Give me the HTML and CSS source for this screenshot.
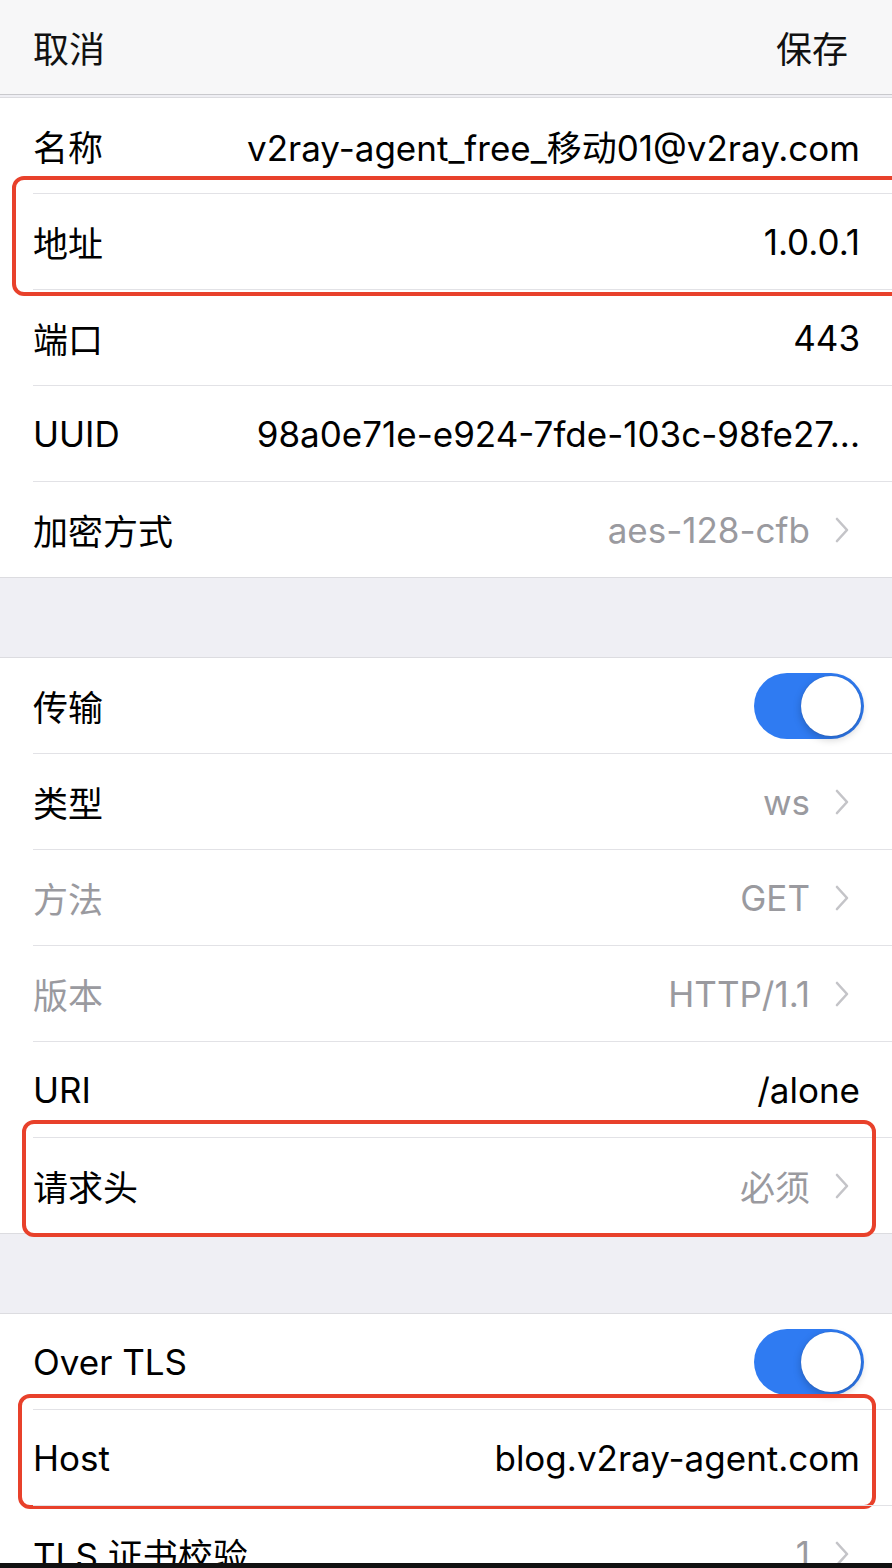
FILE: index.html
```html
<!DOCTYPE html>
<html lang="zh-CN">
<head>
<meta charset="utf-8">
<title>编辑配置</title>
<link rel="stylesheet" href="styles.css">
</head>
<body>
<div class="screen">
  <header class="navbar">
    <span class="nav-btn">取消</span>
    <span class="nav-btn">保存</span>
  </header>

  <section class="group first">
    <div class="row">
      <span class="label">名称</span>
      <span class="value">v2ray-agent_free_移动01@v2ray.com</span>
    </div>
    <div class="row">
      <span class="label">地址</span>
      <span class="value">1.0.0.1</span>
      <span class="mark mark-addr"></span>
    </div>
    <div class="row">
      <span class="label">端口</span>
      <span class="value">443</span>
    </div>
    <div class="row">
      <span class="label">UUID</span>
      <span class="value">98a0e71e-e924-7fde-103c-98fe27...</span>
    </div>
    <div class="row nav">
      <span class="label">加密方式</span>
      <span class="value muted">aes-128-cfb</span>
      <svg class="chev" viewBox="0 0 16 28"><path d="M3 3 L13 14 L3 25"/></svg>
    </div>
  </section>

  <section class="group">
    <div class="row switch-row">
      <span class="label">传输</span>
      <span class="toggle"><span class="knob"></span></span>
    </div>
    <div class="row nav">
      <span class="label">类型</span>
      <span class="value muted">ws</span>
      <svg class="chev" viewBox="0 0 16 28"><path d="M3 3 L13 14 L3 25"/></svg>
    </div>
    <div class="row nav">
      <span class="label muted">方法</span>
      <span class="value muted">GET</span>
      <svg class="chev" viewBox="0 0 16 28"><path d="M3 3 L13 14 L3 25"/></svg>
    </div>
    <div class="row nav">
      <span class="label muted">版本</span>
      <span class="value muted">HTTP/1.1</span>
      <svg class="chev" viewBox="0 0 16 28"><path d="M3 3 L13 14 L3 25"/></svg>
    </div>
    <div class="row">
      <span class="label">URI</span>
      <span class="value">/alone</span>
    </div>
    <div class="row nav">
      <span class="label">请求头</span>
      <span class="value muted">必须</span>
      <svg class="chev" viewBox="0 0 16 28"><path d="M3 3 L13 14 L3 25"/></svg>
      <span class="mark mark-header"></span>
    </div>
  </section>

  <section class="group">
    <div class="row switch-row">
      <span class="label">Over TLS</span>
      <span class="toggle"><span class="knob"></span></span>
    </div>
    <div class="row">
      <span class="label">Host</span>
      <span class="value">blog.v2ray-agent.com</span>
      <span class="mark mark-host"></span>
    </div>
    <div class="row nav">
      <span class="label">TLS 证书校验</span>
      <span class="value muted">1</span>
      <svg class="chev" viewBox="0 0 16 28"><path d="M3 3 L13 14 L3 25"/></svg>
    </div>
  </section>
</div>
<div class="bottom-bar"></div>
</body>
</html>
```

FILE: styles.css
```css
html, body {
  margin: 0;
  padding: 0;
}
body {
  width: 892px;
  height: 1568px;
  overflow: hidden;
  background: #efeff4;
  font-family: Inter, "Noto Sans CJK SC", sans-serif;
  color: #000;
}
.screen {
  height: 1563px;
  overflow: hidden;
  background: #efeff4;
}
.navbar {
  height: 94px;
  background: #f7f7f8;
  border-bottom: 1px solid #c9c9cd;
  display: flex;
  align-items: center;
  justify-content: space-between;
  padding: 0 44px 0 33px;
  font-family: "Noto Sans CJK SC", sans-serif;
  font-size: 36px;
  color: #111;
}
.nav-btn {
  line-height: 1;
}
.group {
  background: #fff;
  border-top: 1px solid #dcdce0;
  border-bottom: 1px solid #dcdce0;
  margin-top: 79px;
}
.group.first {
  margin-top: 2px;
}
.row {
  position: relative;
  height: 95px;
  display: flex;
  align-items: center;
  padding: 0 32px 0 33px;
  font-size: 35px;
}
.group .row + .row {
  border-top: 1px solid #e2e2e6;
  margin-left: 33px;
  padding-left: 0;
}
.label {
  flex: none;
  min-width: 190px;
  margin-right: 8px;
  white-space: nowrap;
}
.value {
  flex: 1;
  min-width: 0;
  text-align: right;
  white-space: nowrap;
  overflow: hidden;
}
.muted {
  color: #9a9a9f;
}
.row.nav {
  padding-right: 42px;
}
.chev {
  flex: none;
  width: 16px;
  height: 28px;
  margin-left: 24px;
}
.chev path {
  fill: none;
  stroke: #c4c4c8;
  stroke-width: 2.6;
  stroke-linecap: round;
  stroke-linejoin: round;
}
.switch-row {
  justify-content: space-between;
  padding-right: 28px;
}
.toggle {
  flex: none;
  width: 110px;
  height: 66px;
  border-radius: 33px;
  background: #2f7bf2;
  position: relative;
  display: block;
}
.knob {
  position: absolute;
  top: 3px;
  right: 3px;
  width: 60px;
  height: 60px;
  border-radius: 50%;
  background: #fff;
  box-shadow: 0 3px 8px rgba(0, 0, 0, 0.22), 0 0 1px rgba(0, 0, 0, 0.2);
}
.mark {
  position: absolute;
  border: 4px solid #e8412b;
  border-radius: 12px;
  pointer-events: none;
  box-sizing: border-box;
}
.mark-addr {
  left: -21px;
  right: -40px;
  top: -18px;
  bottom: -7px;
}
.mark-header {
  left: -11px;
  right: 16px;
  top: -18px;
  bottom: -4px;
}
.mark-host {
  left: -15px;
  right: 16px;
  top: -16px;
  bottom: -4px;
}
.bottom-bar {
  height: 5px;
  background: #111;
}
```
